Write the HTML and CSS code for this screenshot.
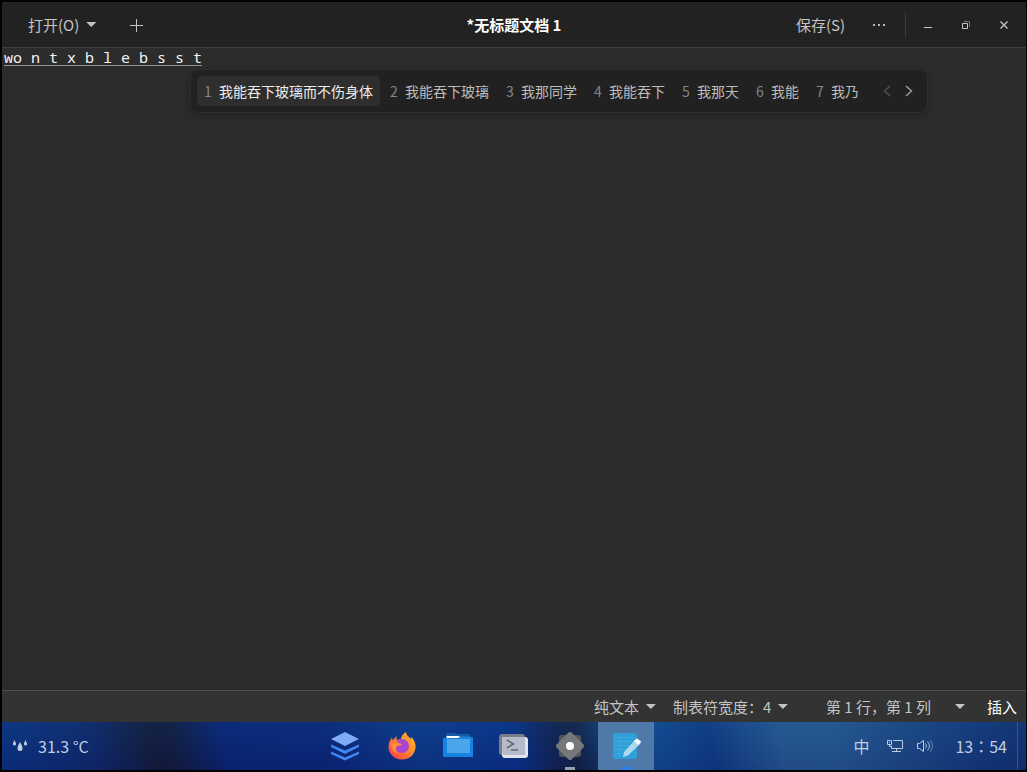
FILE: index.html
```html
<!DOCTYPE html>
<html lang="zh-CN">
<head>
<meta charset="utf-8">
<title>*无标题文档 1</title>
<link rel="stylesheet" href="styles.css">
</head>
<body>
<main class="editor">
  <header class="header">
    <div class="header-side">
      <button class="btn open" aria-haspopup="menu">打开(O)<span class="caret"></span></button>
      <button class="btn add" aria-label="新建"><svg width="14" height="14" viewBox="0 0 14 14"><path d="M6.500 1v13M0 7.500h13" stroke="#c4c4c4"/></svg></button>
    </div>
    <h1 class="title">*无标题文档 1</h1>
    <div class="header-side header-end">
      <button class="btn">保存(S)</button>
      <button class="btn more" aria-label="更多"><svg width="14" height="4" viewBox="0 0 14 4"><path d="M1 1h2v2H1zM6 1h2v2H6zM11 1h2v2h-2z" fill="#b4b4b4"/></svg></button>
      <div class="window-controls">
        <button class="btn win" aria-label="最小化"><svg width="10" height="10" viewBox="0 0 10 10"><path d="M1 7.500h8" stroke="#c4c4c4"/></svg></button>
        <button class="btn win" aria-label="还原"><svg width="10" height="10" viewBox="0 0 10 10"><path d="M1.500 3.500h5v5h-5z" fill="none" stroke="#c8c8c8"/><path d="M3 1.500h5.500V7" fill="none" stroke="#777"/></svg></button>
        <button class="btn win" aria-label="关闭"><svg width="10" height="10" viewBox="0 0 10 10"><path d="M1.500 1.500l7 7M8.500 1.500l-7 7" stroke="#c4c4c4" stroke-width="1.400"/></svg></button>
      </div>
    </div>
  </header>
  <div class="document">
    <textarea class="text" aria-label="文档内容" spellcheck="false">wo n t x b l e b s s t</textarea>
    <div class="candidates">
      <button class="candidate selected"><span>1</span>我能吞下玻璃而不伤身体</button>
      <button class="candidate"><span>2</span>我能吞下玻璃</button>
      <button class="candidate"><span>3</span>我那同学</button>
      <button class="candidate"><span>4</span>我能吞下</button>
      <button class="candidate"><span>5</span>我那天</button>
      <button class="candidate"><span>6</span>我能</button>
      <button class="candidate"><span>7</span>我乃</button>
      <div class="pager">
        <button class="btn page" aria-label="上一页" disabled><svg width="8" height="12" viewBox="0 0 8 12"><path d="M7 1L1.500 6 7 11" fill="none" stroke="#555" stroke-width="1.300"/></svg></button>
        <button class="btn page" aria-label="下一页"><svg width="8" height="12" viewBox="0 0 8 12"><path d="M1 1l5.500 5L1 11" fill="none" stroke="#999" stroke-width="1.500"/></svg></button>
      </div>
    </div>
  </div>
  <footer class="status">
    <label class="choice"><select aria-label="语言"><option>纯文本</option></select><span class="caret"></span></label>
    <label class="choice tab"><span>制表符宽度：<select><option>4</option></select></span><span class="caret"></span></label>
    <button class="btn position">第 1 行，第 1 列<span class="caret"></span></button>
    <span class="mode">插入</span>
  </footer>
</main>
<nav class="taskbar">
  <div class="weather">
    <svg width="16" height="14" viewBox="0 0 16 14"><path d="M8 3c1 2 2.500 4 2.500 6.500a2.500 2.500 0 0 1-5 0C5.500 7 7 5 8 3zM2.500 1c.5 1.500 1.500 2.500 1.500 4a1.500 1.500 0 0 1-3 0c0-1.500 1-2.500 1.500-4zM13.500 1c.5 1.500 1.500 2.500 1.500 4a1.500 1.500 0 0 1-3 0c0-1.500 1-2.500 1.500-4z" fill="#c3cde0"/></svg>
    <span>31.3 °C</span>
  </div>
  <div class="apps">
    <button class="app" aria-label="应用程序"><svg width="30" height="30" viewBox="0 0 30 30"><path d="M15 1l14 7-14 7L1 8z" fill="#7dabf5"/><path d="M1 13.500l14 6 14-6V16l-14 7-14-7zM1 20.500l14 6 14-6V23l-14 6.500L1 23z" fill="#4287f1"/></svg></button>
    <button class="app" aria-label="Firefox"><svg width="30" height="30" viewBox="0 0 30 30">
      <defs><linearGradient id="fox" x1="1" y1="0" x2="0" y2="1"><stop offset="0" stop-color="#ffc62e"/><stop offset=".45" stop-color="#ff8a2d"/><stop offset=".8" stop-color="#ff5144"/><stop offset="1" stop-color="#f02c68"/></linearGradient></defs>
      <path d="M1.500 16C1.500 12 3 9 5 6.500l.8 3L9.500 5v4c2 0 3-1 4.500-1 .5-3 2-5 5-7 0 3 2 4 4 6l1 1 .5-2c3 3 4.500 7 4 11-1 7-6.500 11.500-13.500 11.500S1.500 23 1.500 16z" fill="url(#fox)"/>
      <path d="M14 8c.5-3 2-5 5-7 0 4 4 6 5 10 1 3 0 5-1 7 0-5-4-8-9-10z" fill="#ff982c"/><circle cx="15" cy="15" r="7" fill="#a846ce"/><path d="M4 12l5-1 6 2c-1 1.500-3 1.500-5 2-2 4-1 6 1 8-4-1-7-5-7-11z" fill="#ff8a38"/></svg></button>
    <button class="app" aria-label="文件"><svg width="30" height="30" viewBox="0 0 30 30"><path d="M3 5V3q0-1 1-1h7l2 1h14v8H3z" fill="#125ca8"/><path d="M3.500 5h23v7h-23z" fill="#fff"/><path d="M16 5h11v2H18z" fill="#146fc1"/><path d="M0 8q0-1 1-1h13l4-1h11q1 0 1 1v18q0 1-1 1H1q-1 0-1-1z" fill="#1583df"/><path d="M4 8h23v14H4z" fill="#4ba5eb"/></svg></button>
    <button class="app" aria-label="终端"><svg width="30" height="30" viewBox="0 0 30 30"><rect x="0" y="3" width="26" height="21" rx="3" fill="#787d88"/><rect x="3" y="6" width="26" height="21" rx="3" fill="#e0e4ed"/><path d="M3 6h23v18H6q-3 0-3-3z" fill="#b5bbc9"/><path d="M8 9l6.500 4L8 17M12 19h7" fill="none" stroke="#5f6571" stroke-width="1.500"/></svg></button>
    <button class="app" aria-label="设置"><svg width="30" height="30" viewBox="0 0 30 30"><rect x="4" y="4" width="22" height="22" rx="3" fill="#53575d"/><path d="M13.500 1.600q1.500-1 3 0L28.500 13.500q1 1.500 0 3L16.500 28.500q-1.500 1-3 0L1.500 16.500q-1-1.500 0-3z" fill="#77787a"/><circle cx="15" cy="15" r="4" fill="#fff"/></svg><i class="dot"></i></button>
    <button class="app active" aria-label="文本编辑器"><svg width="30" height="30" viewBox="0 0 30 30"><rect x="2" y="2" width="24" height="26" rx="3" fill="#309fd7"/><path d="M8.500 4v22M4 6.500h20M4 10.500h20M4 14.500h16M4 18.500h12M4 22.500h8" stroke="#42a7db"/><path d="M12 26l1-5L24 9l5 4-12 11.500z" fill="#acd9ef"/><path d="M23 10l2-2q1-1 2 0l2.500 2q1 1 0 2l-2 2z" fill="#f2fafd"/></svg><i class="dot"></i></button>
  </div>
  <div class="tray">
    <button class="btn ime">中</button>
    <button class="btn" aria-label="网络"><svg width="17" height="14" viewBox="0 0 17 14"><path d="M6 1.500h9.500v8h-11V7M.5 1.500h4v4h-4zM2.500 5.500v2h2M9.500 9.500v3M5 12.500h9" fill="none" stroke="#bdcbe0"/><path d="M2 3h1v1H2z" fill="#bdcbe0"/></svg></button>
    <button class="btn" aria-label="音量"><svg width="17" height="14" viewBox="0 0 17 14"><path d="M.5 4.500h2l4-3v11l-4-3h-2z" fill="none" stroke="#c3cde0"/><path d="M8.500 4.500q2 2.500 0 5M10.500 2.500q4 4.500 0 9" fill="none" stroke="#b1c1d9"/><path d="M13 1q5 6 0 12" fill="none" stroke="#6484b0"/></svg></button>
    <time class="clock" lang="zh-TW">13：54</time>
    <button class="desktop" aria-label="显示桌面"></button>
  </div>
</nav>
</body>
</html>
```
FILE: styles.css
```css
* { box-sizing: border-box; }
html { height: 100%; }
body {
  margin: 0;
  height: 100%;
  display: flex;
  flex-direction: column;
  background: #000;
  padding: 2px 1px 2px 2px;
  color: #c4c4c4;
  font: 15px/22px "Noto Sans CJK SC", sans-serif;
}
button, select { font: inherit; color: inherit; background: none; border: 0; padding: 0; margin: 0; }
svg { display: block; flex: none; }
.btn { display: flex; align-items: center; justify-content: center; }
.caret {
  width: 10px;
  height: 5px;
  background: #c4c4c4;
  clip-path: polygon(0 0, 100% 0, 50% 100%);
}

.editor { flex: 1; min-height: 0; display: flex; flex-direction: column; background: #2c2c2c; }
.header {
  display: grid;
  grid-template-columns: 1fr auto 1fr;
  align-items: center;
  height: 46px;
  background: #222;
  border-bottom: 1px solid #3d3d3d;
}
.header-side { display: flex; align-items: center; }
.open { margin-left: 26px; gap: 7px; }
.add { margin-left: 34px; }
.title { margin: 0; font-size: 15px; line-height: 22px; font-weight: 700; color: #fff; }
.header-end { justify-content: flex-end; }
.more { margin: 0 19px 0 27px; }
.window-controls { display: flex; height: 24px; border-left: 1px solid #3d3d3d; padding: 0 3px; }
.win { width: 38px; }

.document { flex: 1; position: relative; display: flex; }
.text {
  flex: 1;
  border: 0;
  margin: 0;
  padding: 0 2px;
  resize: none;
  outline: 0;
  background: transparent;
  color: #f4f4f4;
  font: 15px/18px "Noto Sans Mono", "DejaVu Sans Mono", monospace;
  text-decoration: underline #929292 1px;
  text-underline-offset: 2px;
}
.candidates {
  position: absolute;
  left: 188px;
  top: 21px;
  display: flex;
  align-items: center;
  gap: 3px;
  padding: 6px 7px 6px 6px;
  border: 1px solid #2d2d2d;
  border-radius: 8px;
  background: #212121;
  box-shadow: 0 2px 8px rgba(0, 0, 0, .25);
  font-size: 14px;
  line-height: 30px;
}
.candidate { display: flex; gap: 7px; padding: 0 7px; border-radius: 5px; color: #bcbcbc; white-space: nowrap; }
.candidate span { width: 8px; color: #858585; }
.candidate.selected { background: #2e2e2e; color: #ececec; }
.pager { display: flex; margin-left: 7px; }
.page { width: 22px; height: 30px; }

.status {
  display: flex;
  align-items: center;
  justify-content: flex-end;
  height: 32px;
  padding-right: 9px;
  background: #333;
  border-top: 1px solid #505050;
}
.choice { display: flex; align-items: center; gap: 6px; }
.choice select { appearance: none; }
.choice.tab { margin-left: 17px; }
.position { margin-left: 38px; gap: 24px; }
.mode { margin-left: 22px; color: #fff; }

.taskbar {
  flex: none;
  display: flex;
  height: 48px;
  color: #c3cde0;
  font-size: 16px;
  background:
    linear-gradient(rgba(20, 70, 150, .15), rgba(5, 0, 80, .18)),
    linear-gradient(80deg, #0c3582 0%, #102c6a 9%, #141d36 15%, #131d3a 17%, #0a2874 22%, #0b2a78 32%, #0d3c88 41%, #0b3488 50%, #12254f 54%, #142442 56%, #145090 61%, #134d90 64%, #103e83 69%, #285c92 76%, #275c91 81%, #1f4e86 87%, #153c7a 95%, #123470 100%);
}
.weather { width: 316px; display: flex; align-items: center; gap: 10px; padding-left: 10px; }
.apps { display: flex; }
.app { position: relative; width: 56px; display: grid; place-items: center; }
.app:first-child { padding-right: 2px; }
.app.active { background: #4e79a9; }
.dot { position: absolute; bottom: 0; left: 23px; width: 10px; height: 3px; background: #969eb0; }
.active .dot { background: #2d7ff0; }
.tray { margin-left: auto; display: flex; align-items: center; }
.ime { margin-right: 18px; }
.tray .btn + .btn + .btn { margin-left: 13px; }
.clock { margin: 0 10px 0 21px; font-family: "Noto Sans CJK TC", sans-serif; }
.desktop { width: 9px; align-self: stretch; border-left: 1px solid #36578d; }
```
